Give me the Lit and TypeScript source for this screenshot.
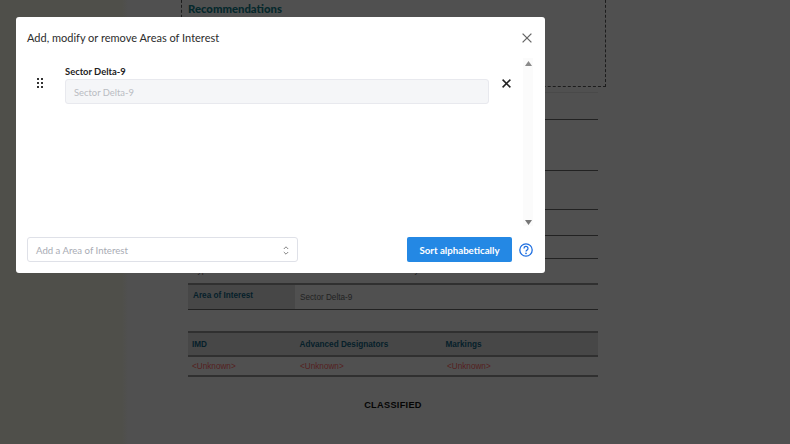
import { LitElement, html, css } from "lit";
import { customElement } from "lit/decorators.js";

@customElement("app-root")
export class AppRoot extends LitElement {
  static styles = css`
    :host { display: block; width: 790px; height: 444px; position: relative; overflow: hidden; background: linear-gradient(90deg, #4f4f4a 0, #4f4f4a 122px, #505050 128px); font-family: "Lato", sans-serif; }
    .doc { width: 410px; margin-left: 188px; font-family: "Liberation Sans", sans-serif; font-size: 8.2px; color: #111; display: flex; flex-direction: column; }
    .dash { position: absolute; left: 181px; top: -10px; width: 425px; height: 97px; border: 1px dashed #1c1c1c; border-top: 0; box-sizing: border-box; }
    .rec { font-family: "Lato", sans-serif; font-weight: 900; font-size: 11.3px; color: #06282c; height: 93px; padding-top: 2px; box-sizing: border-box; border-bottom: 1px solid #494949; }
    .line { border-bottom: 1px solid #222; box-sizing: border-box; }
    .frag { display: grid; grid-template-columns: 95px 102px 1fr; padding: 7px 0 0 5px; color: #222; height: 24px; box-sizing: border-box; }
    .aoi { display: flex; height: 27px; border-top: 2px solid #303030; border-bottom: 1px solid #222; box-sizing: border-box; }
    .aoi b { width: 107px; background: #474747; color: #06202a; padding: 6px 0 0 5px; box-sizing: border-box; }
    .aoi span { padding: 8px 0 0 5px; color: #222; }
    .head { display: grid; grid-template-columns: 107.5px 146px 1fr; height: 26px; margin-top: 21px; background: #474747; border-top: 2px solid #303030; border-bottom: 2px solid #303030; box-sizing: border-box; color: #06202a; font-weight: 700; align-items: center; padding-left: 4px; }
    .vals { display: grid; grid-template-columns: 108px 147px 1fr; height: 20px; border-bottom: 2px solid #303030; box-sizing: border-box; color: #552020; align-items: center; padding-left: 4px; }
    .classified { margin-top: 23px; text-align: center; font-weight: 700; color: #050505; font-size: 9.2px; letter-spacing: .3px; }
    .dialog { position: absolute; left: 16px; top: 17px; width: 529px; height: 256px; background: #fff; border-radius: 3px; box-sizing: border-box; display: flex; flex-direction: column; color: #333; }
    .hd { display: flex; justify-content: space-between; align-items: center; height: 41px; padding: 0 13px 0 11px; font-size: 11px; color: #2c2c2c; }
    .bd { flex: 1; display: flex; position: relative; }
    .grip { width: 49px; display: flex; justify-content: center; padding: 20px 1px 0 0; box-sizing: border-box; }
    .item { width: 424px; padding-top: 7px; }
    .item label { display: block; font-size: 9.4px; font-weight: 700; color: #222; line-height: 14px; height: 14px; }
    .input { height: 25px; background: #f5f6f8; border: 1px solid #e8e9ee; border-radius: 3px; box-sizing: border-box; padding: 1px 0 0 8px; display: flex; align-items: center; font-size: 9.4px; color: #b9bcc2; }
    .rm { width: 35px; display: flex; justify-content: center; padding-top: 21px; box-sizing: border-box; }
    .scroll { position: absolute; left: 507px; top: 0; width: 10px; height: 168px; background: #fbfbfb; display: flex; flex-direction: column; justify-content: space-between; align-items: center; }
    .ft { display: flex; align-items: center; padding: 0 0 11px 11px; height: 36px; box-sizing: border-box; }
    .sel { width: 271px; height: 25px; border: 1px solid #dfe1e8; border-radius: 3px; box-sizing: border-box; display: flex; align-items: center; justify-content: space-between; padding: 1px 8px 0; font-size: 9.6px; color: #a9acb4; }
    .btn { margin-left: 109px; width: 105px; height: 25px; background: #2488e4; color: #fff; border-radius: 2px; font-size: 9.7px; font-weight: 700; display: flex; align-items: center; justify-content: center; }
    .help { margin-left: 7px; display: flex; }
  `;
  render() {
    return html`
      <div class="dash"></div>
      <div class="doc">
        <div class="rec">Recommendations</div>
        <div class="line" style="height:27px"></div>
        <div class="line" style="height:51px"></div>
        <div class="line" style="height:39px"></div>
        <div class="line" style="height:26px"></div>
        <div class="line" style="height:23px"></div>
        <div class="frag"><span>Type</span><span>Status</span><span>Country</span></div>
        <div class="aoi"><b>Area of Interest</b><span>Sector Delta-9</span></div>
        <div class="head"><span>IMD</span><span>Advanced Designators</span><span>Markings</span></div>
        <div class="vals"><span>&lt;Unknown&gt;</span><span>&lt;Unknown&gt;</span><span>&lt;Unknown&gt;</span></div>
        <div class="classified">CLASSIFIED</div>
      </div>
      <div class="dialog">
        <div class="hd"><span>Add, modify or remove Areas of Interest</span>
          <svg width="10" height="10" viewBox="0 0 10 10"><path d="M.6.6l8.8 8.8M9.4.6L.6 9.4" stroke="#666" stroke-width="1.3" fill="none"/></svg>
        </div>
        <div class="bd">
          <div class="grip"><svg width="6" height="10" viewBox="0 0 6 10" fill="#333"><rect x="0" y="0" width="2" height="2"/><rect x="4" y="0" width="2" height="2"/><rect x="0" y="4" width="2" height="2"/><rect x="4" y="4" width="2" height="2"/><rect x="0" y="8" width="2" height="2"/><rect x="4" y="8" width="2" height="2"/></svg></div>
          <div class="item"><label>Sector Delta-9</label><div class="input">Sector Delta-9</div></div>
          <div class="rm"><svg width="9" height="9" viewBox="0 0 9 9"><path d="M.6.6l7.8 7.8M8.4.6L.6 8.4" stroke="#222" stroke-width="1.5" fill="none"/></svg></div>
          <div class="scroll">
            <svg width="7" height="6" viewBox="0 0 7 6" style="margin-top:3px"><path d="M3.5 0L7 5H0z" fill="#8a8a8a"/></svg>
            <svg width="7" height="6" viewBox="0 0 7 6"><path d="M0 0h7L3.5 5z" fill="#777"/></svg>
          </div>
        </div>
        <div class="ft">
          <div class="sel"><span>Add a Area of Interest</span>
            <svg width="6" height="9" viewBox="0 0 6 9"><path d="M.8 3L3 .8 5.2 3M.8 6L3 8.2 5.2 6" stroke="#777" stroke-width=".9" fill="none"/></svg>
          </div>
          <div class="btn">Sort alphabetically</div>
          <div class="help"><svg width="14" height="14" viewBox="0 0 14 14"><circle cx="7" cy="7" r="6.2" stroke="#1f6fe0" stroke-width="1.3" fill="none"/><path d="M5 5.4a2 2 0 1 1 3 1.7c-.7.4-1 .8-1 1.5" stroke="#1f6fe0" stroke-width="1.3" fill="none"/><circle cx="7" cy="10.3" r=".85" fill="#1f6fe0"/></svg></div>
        </div>
      </div>
    `;
  }
}
